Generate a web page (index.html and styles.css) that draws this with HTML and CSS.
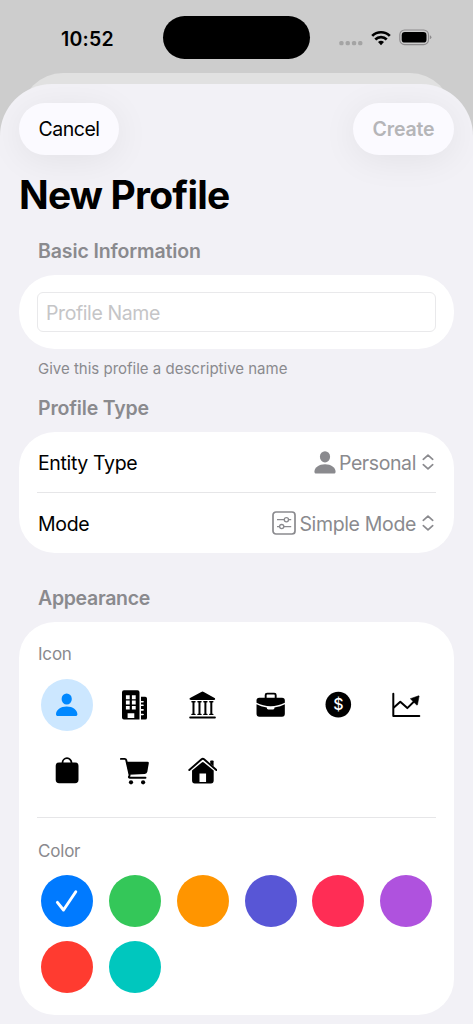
FILE: index.html
```html
<!DOCTYPE html>
<html lang="en">
<head>
<meta charset="utf-8">
<title>New Profile</title>
<link rel="stylesheet" href="styles.css">
</head>
<body>
<div class="phone">
  <header class="status">
    <div class="time">10:52</div>
    <div class="island"></div>
    <div class="indicators">
      <svg class="dots" width="24" height="6" viewBox="0 0 24 6"><g fill="#a4a4a4"><rect x="0.3" y="1" width="4.3" height="4.3" rx="1.6"/><rect x="6.6" y="1" width="4.3" height="4.3" rx="1.6"/><rect x="12.9" y="1" width="4.3" height="4.3" rx="1.6"/><rect x="19.1" y="1" width="4.3" height="4.3" rx="1.6"/></g></svg>
      <svg class="wifi" width="20" height="16" viewBox="0 0 20 16"><g fill="none" stroke="#000" stroke-width="2.700"><path d="M1.200 5.900a12.400 12.400 0 0 1 17.600 0"/><path d="M4.300 9.500a8 8 0 0 1 11.400 0"/></g><path d="M7 12.100a4.400 4.400 0 0 1 6 0l-3 3.200z"/></svg>
      <svg class="battery" width="33" height="17" viewBox="0 0 33 17"><rect x="0.8" y="1" width="28.7" height="14.6" rx="4.8" fill="none" stroke="#8d8b8d" stroke-width="1.1"/><rect x="2.700" y="3" width="24.800" height="10.600" rx="3.2"/><path d="M30.8 6.3q1.6.5 1.6 2t-1.6 2z" fill="#8d8b8d"/></svg>
    </div>
  </header>
  <div class="back-sheet"></div>
  <main class="sheet">
    <nav class="toolbar">
      <button class="pill cancel"><span>Cancel</span></button>
      <button class="pill create"><span>Create</span></button>
    </nav>
    <h1>New Profile</h1>

    <h2 class="head-basic">Basic Information</h2>
    <section class="card name-card">
      <div class="field">Profile Name</div>
    </section>
    <p class="hint">Give this profile a descriptive name</p>

    <h2 class="head-type">Profile Type</h2>
    <section class="card">
      <div class="row">
        <span class="label entity">Entity Type</span>
        <span class="value">
          <svg class="person" width="22" height="23" viewBox="0 0 22 23" fill="#8a8a8e"><ellipse cx="11" cy="5.8" rx="5.1" ry="5.6"/><path d="M.4 20.7C.4 16.5 5 13.3 11 13.3s10.600 3.200 10.600 7.400c0 1.300-.8 1.900-2 1.900H2.400C1.200 22.600.4 22 .4 20.700z"/></svg>
          <span class="personal">Personal</span>
          <svg class="updown" width="12" height="16" viewBox="0 0 12 16"><path d="M1.300 5.300 6 1.100l4.700 4.200M1.300 10.700 6 14.900l4.700-4.200"/></svg>
        </span>
      </div>
      <hr>
      <div class="row">
        <span class="label mode">Mode</span>
        <span class="value">
          <svg class="sliders" width="24" height="24" viewBox="0 0 24 24" fill="none" stroke="#8a8a8e" stroke-width="1.300"><rect x="1" y="1" width="22" height="22" rx="3" stroke-width="1.700"/><path d="M5 8.700h7.300M16.500 8.700h2.700M5 15.600h2.500M11.800 15.600h7.400"/><circle cx="14.400" cy="8.700" r="2.100"/><circle cx="9.700" cy="15.600" r="2.100"/></svg>
          <span class="simple">Simple Mode</span>
          <svg class="updown" width="12" height="16" viewBox="0 0 12 16"><path d="M1.300 5.300 6 1.100l4.700 4.200M1.300 10.700 6 14.900l4.700-4.200"/></svg>
        </span>
      </div>
    </section>

    <h2 class="head-look">Appearance</h2>
    <section class="card look-card">
      <h3 class="icon-title">Icon</h3>
      <div class="grid icons">
        <div class="cell selected"><svg viewBox="0 0 32 32" fill="#0088ff"><ellipse cx="15.700" cy="10" rx="5.100" ry="5.500"/><path d="M5 25.300C5 21.100 9.600 17.600 15.700 17.600S26.400 21.100 26.400 25.300c0 1.200-.7 1.800-1.900 1.800H6.900C5.700 27.100 5 26.500 5 25.300z"/></svg></div>
        <div class="cell"><svg viewBox="0 0 32 32"><path fill-rule="evenodd" d="M5 1.300h13.500q2 0 2 2v27.300H5q-2 0-2-2V3.300q0-2 2-2zM6.900 6.300v3.900h3.800V6.300zm6 0v3.900h3.800V6.300zm-6 5.300v3.900h3.800v-3.900zm6 0v3.900h3.800v-3.900zm-6 5.300v3.700h3.800v-3.700zm6 0v3.700h3.800v-3.700zM8.600 24.200v4.900h6.700v-4.900z"/><path d="M22 7.700h4.200q1.800 0 1.800 1.800v19.200q0 1.900-1.800 1.900H22v-4.300h1.900q1 0 1-.8t-1-.8H22v-3h1.900q1 0 1-.8t-1-.8H22v-3h1.900q1 0 1-.8t-1-.8H22v-2h1.900q1 0 1-.8t-1-.8H22z"/></svg></div>
        <div class="cell"><svg class="snug" viewBox="0 0 32 32"><path d="M2.700 8.600 15 2q1.300-.7 2.600 0l11.800 6.600q.7 1.700-1 1.900H4.300q-2.200-.2-1.600-1.900z"/><path d="M6.800 12.600v12.900M13.100 12.600v12.900M19.300 12.600v12.900M25.500 12.600v12.900" stroke="#000" stroke-width="2.100"/><path d="M5.200 12.400h3.200M11.500 12.400h3.200M17.700 12.400h3.200M23.900 12.400h3.200M5.200 25.600h3.200M11.500 25.600h3.200M17.700 25.600h3.200M23.900 25.600h3.200" stroke="#000" stroke-width="1.500" stroke-linecap="round"/><path d="M3.300 28.800h26" stroke="#000" stroke-width="2" stroke-linecap="round"/></svg></div>
        <div class="cell"><svg class="snug" viewBox="0 0 32 32"><path d="M11.200 9V5.300q0-1.500 1.500-1.500h7.500q1.500 0 1.500 1.500V9" fill="none" stroke="#000" stroke-width="2"/><path d="M4.500 8h23.800q3 0 3 3v2.400Q24.200 17 16.400 17T1.600 13.400V11q0-3 2.900-3z"/><path d="M1.600 15Q6 17.500 12.400 18.300v.6q0 1.500 1.500 1.500h5q1.500 0 1.500-1.500v-.6Q27 17.500 31.300 15v10q0 3-3 3H4.600q-3 0-3-3z"/></svg></div>
        <div class="cell"><svg viewBox="0 0 32 32"><circle cx="16.300" cy="15.600" r="12.800"/><text class="dollar" x="16.300" y="21.300" text-anchor="middle">$</text></svg></div>
        <div class="cell"><svg viewBox="0 0 32 32"><path d="M3.300 4.800v22.300h26" fill="none" stroke="#000" stroke-width="2" stroke-linecap="round" stroke-linejoin="round"/><path d="m3.600 18.700 6.700-5.900 7 6.300 8-7.800" fill="none" stroke="#000" stroke-width="2" stroke-linejoin="round"/><path d="m20.300 9.700 8.300-2.900q.6-.1.500.5l-1.600 8.500q-.3.500-.8.200z" stroke="#000" stroke-width=".5"/></svg></div>
        <div class="cell"><svg viewBox="0 0 32 32"><path d="M11.500 9V7.700a4.500 4.500 0 0 1 9 0V9" fill="none" stroke="#000" stroke-width="1.800"/><rect x="4.700" y="7.600" width="22.800" height="20.600" rx="3.400"/></svg></div>
        <div class="cell"><svg viewBox="0 0 32 32"><path d="M1.900 3.900h3.800q1.200 0 1.500 1.200l3.300 14.500q.3 1.400-.5 1.900-.5 1.200 1 1.200h15.500" fill="none" stroke="#000" stroke-width="1.900" stroke-linecap="round"/><path d="M7.300 6.700h21.200q1.500 0 1.300 1.500l-1.500 8.500q-.4 2-2.500 2.200L10.100 19.800z"/><circle cx="12" cy="27.300" r="2.100"/><circle cx="24.100" cy="27.300" r="2.100"/></svg></div>
        <div class="cell"><svg class="snug" viewBox="0 0 32 32"><path d="M2.400 14.700 15.300 3.400q1.300-1.100 2.600 0l12.900 11.300" fill="none" stroke="#000" stroke-width="2" stroke-linecap="round"/><path d="M24.400 8V5.500q0-.8.800-.8h1.900q.8 0 .8.800v5.300z"/><path fill-rule="evenodd" d="M5.300 15.200 15.500 6.800q1.100-.8 2.200 0l10.300 8.400v10.600q0 3-2.900 3H8.200q-2.900 0-2.900-3zM13.100 18.300v8.900H20v-8.900z"/></svg></div>
      </div>
      <hr>
      <h3 class="color-title">Color</h3>
      <div class="grid colors">
        <div class="cell blue"><svg viewBox="0 0 32 32"><path d="m6.400 17.300 6.100 7.700 12.300-18.200" fill="none" stroke="#fff" stroke-width="2.900" stroke-linecap="round" stroke-linejoin="round"/></svg></div>
        <div class="cell green"></div>
        <div class="cell orange"></div>
        <div class="cell indigo"></div>
        <div class="cell pink"></div>
        <div class="cell purple"></div>
        <div class="cell red"></div>
        <div class="cell teal"></div>
      </div>
    </section>
  </main>
</div>
</body>
</html>
```
FILE: styles.css
```css
* { box-sizing: border-box; }
body { margin: 0; font-family: Inter, "Liberation Sans", sans-serif; color: #000; }
svg { display: block; flex: none; }
h1, h2, h3, p, hr { margin: 0; }
.phone { width: 473px; height: 1024px; overflow: hidden; background: #cdcdcd; }

.status { height: 73px; display: grid; grid-template-columns: 163px 147px 1fr; align-items: start; }
.time { padding: 27px 0 0 61px; font-size: 19.5px; line-height: 24px; font-weight: 600; letter-spacing: 0.25px; white-space: nowrap; }
.island { margin-top: 16px; height: 43px; border-radius: 22px; background: #000; }
.indicators { display: flex; align-items: center; padding: 29px 0 0 29px; }
.dots { margin-top: 10px; }
.wifi { margin: 1px 0 0 8px; }
.battery { margin-left: 8px; }

.back-sheet { height: 60px; margin: 0 21px -49px; border-radius: 42px 42px 0 0; background: #e1e1e1; }
.sheet { position: relative; height: 940px; padding: 19px 19px 0; border-radius: 52px 52px 0 0; background: #f2f1f6; overflow: hidden; }

.toolbar { display: flex; justify-content: space-between; }
.pill { height: 52px; padding: 1px 0 0; border: 0; border-radius: 26px; background: #fbfaff; font: 400 19.5px/51px Inter, sans-serif; box-shadow: 0 5px 36px rgba(0, 0, 0, .065); white-space: nowrap; }
.cancel { width: 100px; color: #000; letter-spacing: -0.45px; }
.create { width: 101px; color: #b5b5b8; font-weight: 600; letter-spacing: -0.15px; }

h1 { margin: 16px 0 0; height: 48px; font-size: 39px; line-height: 48px; font-weight: 700; letter-spacing: -0.8px; white-space: nowrap; }
h2 { height: 24px; margin-left: 19px; color: #8a8a8e; font-size: 19.5px; line-height: 24px; font-weight: 600; letter-spacing: -0.12px; white-space: nowrap; }
.head-basic { margin-top: 20px; }
.card { border-radius: 36px; background: #fff; padding: 0 18px; }
.name-card { margin-top: 12px; height: 74px; padding-top: 17px; }
.field { height: 40px; padding-left: 8px; border: 1px solid #e9e9eb; border-radius: 6px; color: #c5c5c7; font-size: 19.5px; line-height: 40px; letter-spacing: -0.4px; }
.hint { height: 20px; margin: 9px 0 0 19px; color: #8a8a8e; font-size: 15px; line-height: 21px; white-space: nowrap; }
.head-type { margin: 18px 0 12px 19px; letter-spacing: -0.17px; }
.row { height: 60px; display: flex; align-items: center; justify-content: space-between; padding: 0 2px 0 1px; font-size: 19.5px; }
.row span span, .label { padding-top: 1px; }
.entity { letter-spacing: -0.35px; }
.mode { letter-spacing: -0.3px; }
.personal { letter-spacing: -0.4px; }
.simple { letter-spacing: -0.35px; }
.card hr { height: 1px; border: 0; background: #e6e6e8; }
.value { display: flex; align-items: center; color: #8a8a8e; }
.person, .sliders { margin-right: 3px; }
.updown { margin-left: 6px; fill: none; stroke: #8a8a8e; stroke-width: 1.7; stroke-linecap: round; stroke-linejoin: round; }
.head-look { margin: 33px 0 12px 19px; letter-spacing: -0.3px; }

.look-card { height: 393px; padding-top: 21px; }
h3 { height: 22px; margin-left: 1px; color: #8a8a8e; font-size: 17px; line-height: 23px; font-weight: 400; letter-spacing: -0.2px; }
.grid { display: grid; grid-template-columns: repeat(6, 52px); column-gap: 15.85px; row-gap: 14px; margin-left: 4px; }
.icons { margin-top: 14px; margin-bottom: 20px; }
.cell { width: 52px; height: 52px; border-radius: 50%; display: flex; align-items: center; justify-content: center; }
.cell svg { width: 32px; height: 32px; }
.cell .snug { width: 30.5px; height: 30.5px; margin-right: 1px; }
.selected { background: #cce7ff; }
.dollar { font: 500 16px Inter, sans-serif; fill: #fff; }
.color-title { margin-top: 22px; }
.colors { margin-top: 13.4px; }
.blue { background: #007aff; }
.green { background: #34c759; }
.orange { background: #ff9500; }
.indigo { background: #5856d6; }
.pink { background: #ff2d55; }
.purple { background: #af52de; }
.red { background: #ff3b30; }
.teal { background: #00c7be; }
```
